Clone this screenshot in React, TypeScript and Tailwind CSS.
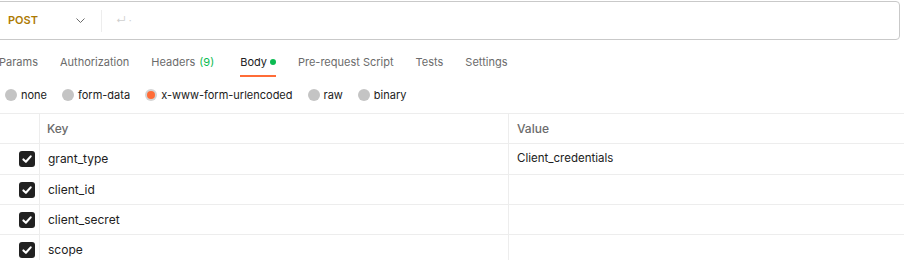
import React from "react";

const tabs = [
  { label: "Params" },
  { label: "Authorization" },
  { label: "Headers", count: "(9)" },
  { label: "Body", active: true },
  { label: "Pre-request Script" },
  { label: "Tests" },
  { label: "Settings" },
];

const radios = [
  { label: "none" },
  { label: "form-data" },
  { label: "x-www-form-urlencoded", selected: true },
  { label: "raw" },
  { label: "binary" },
];

const rows = [
  { key: "grant_type", value: "Client_credentials", h: "h-[31px]" },
  { key: "client_id", value: "", h: "h-[30px]" },
  { key: "client_secret", value: "", h: "h-[30px]" },
  { key: "scope", value: "", h: "h-[30px]" },
];

function Check() {
  return (
    <div className="w-[16px] h-[16px] rounded-[3px] bg-[#212121] flex items-center justify-center">
      <svg width="12" height="12" viewBox="0 0 12 12" fill="none">
        <path d="M2.4 6.4 L4.9 8.8 L9.7 3.4" stroke="#ffffff" strokeWidth="2.1" strokeLinecap="round" strokeLinejoin="round" />
      </svg>
    </div>
  );
}

export default function App() {
  return (
    <div
      className="w-[904px] h-[260px] bg-white overflow-hidden text-[12px] text-[#212121]"
      style={{ fontFamily: "Inter, 'Noto Sans', sans-serif" }}
    >
      {/* URL bar */}
      <div className="pt-[1px] pr-[4px]">
        <div className="ml-[-4px] h-[39px] border border-[#c9c9c9] rounded-[4px] flex items-center">
          <div className="pl-[11px] w-[75px] font-semibold text-[#ad7a03] text-[11px]">POST</div>
          <svg width="9" height="5" viewBox="0 0 9 5" fill="none" className="ml-[4px]">
            <path d="M0.5 0.5 L4.5 4.5 L8.5 0.5" stroke="#6b6b6b" strokeWidth="1" />
          </svg>
          <div className="ml-[16px] w-px h-[22px] bg-[#ededed]" />
          <div className="ml-[14px] text-[10px] text-[#cfcfcf]">↵ ·</div>
        </div>
      </div>

      {/* Tabs */}
      <div className="mt-[5px] h-[33px] ml-[-1px] flex items-stretch gap-[22px] text-[#6b6b6b] text-[11px]">
        {tabs.map((t) => (
          <div key={t.label} className={`relative flex items-center pt-[1px] ${t.count ? "pr-[4px]" : ""}`}>
            <span className={t.active ? "text-[#212121]" : ""}>{t.label}</span>
            {t.count && <span className="ml-[4px] text-[#0cbb52]">{t.count}</span>}
            {t.active && <span className="ml-[3px] w-[6px] h-[6px] rounded-full bg-[#0cbb52]" />}
            {t.active && <span className="absolute left-0 right-0 bottom-[1px] h-[2px] bg-[#ff6c37]" />}
          </div>
        ))}
      </div>

      {/* Radio row */}
      <div className="h-[35px] pl-[5px] flex items-center gap-[15px] pb-[1px] text-[11px]">
        {radios.map((r) => (
          <div key={r.label} className="flex items-center gap-[4px]">
            {r.selected ? (
              <span className="w-[12px] h-[12px] rounded-full bg-[#d4d4d4] flex items-center justify-center">
                <span className="w-[8px] h-[8px] rounded-full bg-[#ff6c37]" />
              </span>
            ) : (
              <span className="w-[12px] h-[12px] rounded-full bg-[#c4c4c4]" />
            )}
            <span>{r.label}</span>
          </div>
        ))}
      </div>

      {/* Table */}
      <div className="border-t border-[#ededed]">
        <div className="flex h-[30px] border-b border-[#ededed] text-[#6b6b6b] font-medium">
          <div className="w-[40px] border-r border-[#ededed]" />
          <div className="w-[469px] border-r border-[#ededed] pl-[7px] flex items-center">Key</div>
          <div className="flex-1 pl-[8px] flex items-center">Value</div>
        </div>
        {rows.map((r) => (
          <div key={r.key} className={`flex border-b border-[#ededed] ${r.h}`}>
            <div className="w-[40px] border-r border-[#ededed] flex items-center justify-end pr-[4px]">
              <Check />
            </div>
            <div className="w-[469px] border-r border-[#ededed] pl-[8px] flex items-center">{r.key}</div>
            <div className="flex-1 pl-[8px] flex items-center text-[11.5px]">{r.value}</div>
          </div>
        ))}
      </div>
    </div>
  );
}
